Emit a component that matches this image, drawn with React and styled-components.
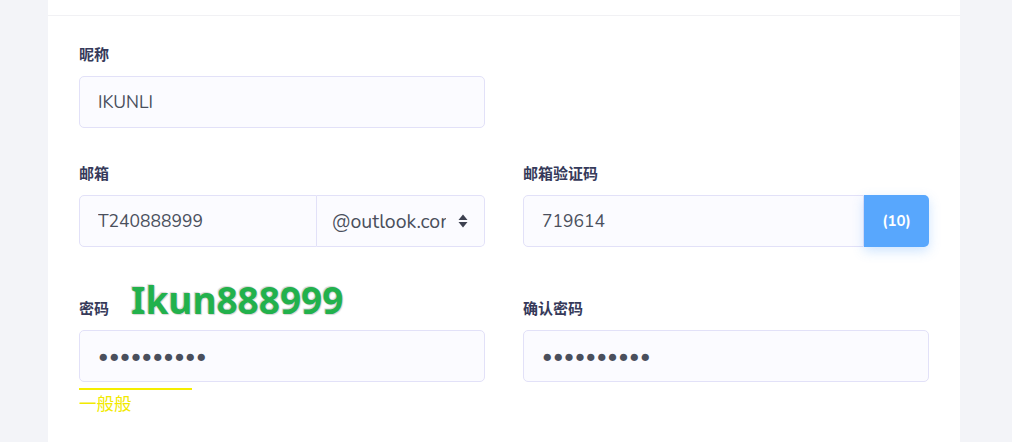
import React from "react";
import styled, { createGlobalStyle } from "styled-components";

const GlobalStyle = createGlobalStyle`
  html, body {
    margin: 0;
    padding: 0;
    background: #f3f4f8;
  }
  body {
    font-family: "Nunito", Lato, "Noto Sans CJK SC", sans-serif;
  }
`;

const Page = styled.div`
  min-height: 442px;
  padding-left: 48px;
  overflow: hidden;
`;

const Card = styled.div`
  width: 912px;
  min-height: 442px;
  background: #fff;
`;

const CardHeader = styled.div`
  height: 15px;
  border-bottom: 1px solid #f1f1f4;
`;

const CardBody = styled.div`
  padding: 28px 31px 30px;
  display: flex;
  flex-direction: column;
  gap: 35px;
`;

const Row = styled.div`
  display: grid;
  grid-template-columns: 406px 406px;
  column-gap: 38px;
  row-gap: 11px;
  align-items: end;
`;

const Label = styled.label`
  display: flex;
  align-items: baseline;
  gap: 22px;
  font-family: Lato, "Noto Sans CJK SC", sans-serif;
  font-size: 15px;
  line-height: 21px;
  font-weight: 700;
  color: #363a5a;
`;

const Hint = styled.span`
  font-family: "Noto Sans", "Noto Sans CJK SC", sans-serif;
  font-size: 37px;
  line-height: 36px;
  font-weight: 700;
  color: #22b14c;
  text-shadow: 0 0 1px #c8c8c8, 1px 1px 1px #d8d8d8, -1px -1px 1px #d8d8d8;
`;

const Field = styled.div`
  align-self: start;
`;

const Input = styled.input`
  box-sizing: border-box;
  width: 100%;
  height: 52px;
  padding: 0 18px;
  border: 1px solid #e2e1f8;
  border-radius: 5px;
  background: #fbfbff;
  font-family: "Nunito", Lato, sans-serif;
  font-size: 17.5px;
  color: #4a4f5c;
  outline: none;
  ${(p) => p.$attached && `border-radius: 5px 0 0 5px; flex: 1; min-width: 0;`}
  &[type="password"] {
    font-size: 20px;
    letter-spacing: 0.4px;
  }
`;

const Group = styled.div`
  display: flex;
  height: 52px;
`;

const SelectWrap = styled.div`
  position: relative;
  width: 168px;
  flex: none;
`;

const Select = styled.select`
  box-sizing: border-box;
  width: 100%;
  height: 52px;
  appearance: none;
  padding: 0 38px 0 15px;
  border: 1px solid #e2e1f8;
  border-left: none;
  border-radius: 0 5px 5px 0;
  background: #fbfbff;
  font-family: "Nunito", Lato, sans-serif;
  font-size: 19.5px;
  color: #4a4f5c;
  outline: none;
`;

const Caret = styled.svg`
  position: absolute;
  right: 17px;
  top: 50%;
  transform: translateY(-50%);
  pointer-events: none;
`;

const SendButton = styled.button`
  width: 65px;
  flex: none;
  border: none;
  border-radius: 0 5px 5px 0;
  background: #58a7fd;
  box-shadow: 0 4px 12px rgba(88, 167, 253, 0.3);
  color: #fff;
  font-family: "Nunito", Lato, sans-serif;
  font-size: 15px;
  font-weight: 700;
`;

const Strength = styled.div`
  margin-top: 6px;
  width: ${(p) => p.$width}px;
  height: 2px;
  background: ${(p) => p.$color};
`;

const StrengthText = styled.div`
  margin-top: 1px;
  font-family: "Noto Sans CJK SC", sans-serif;
  font-size: 17.5px;
  line-height: 24px;
  color: ${(p) => p.$color};
`;

export default function App() {
  return (
    <>
      <GlobalStyle />
      <Page>
        <Card>
          <CardHeader />
          <CardBody>
            <Row>
              <Label>昵称</Label>
              <span />
              <Field>
                <Input value="IKUNLI" readOnly />
              </Field>
            </Row>

            <Row>
              <Label>邮箱</Label>
              <Label>邮箱验证码</Label>
              <Field>
                <Group>
                  <Input $attached value="T240888999" readOnly />
                  <SelectWrap>
                    <Select defaultValue="outlook">
                      <option value="outlook">@outlook.com</option>
                      <option value="qq">@qq.com</option>
                      <option value="163">@163.com</option>
                    </Select>
                    <Caret width="10" height="14" viewBox="0 0 10 14">
                      <path d="M5 0.5L9.5 6H0.5Z" fill="#3d4150" />
                      <path d="M5 13.5L9.5 8H0.5Z" fill="#3d4150" />
                    </Caret>
                  </SelectWrap>
                </Group>
              </Field>
              <Field>
                <Group>
                  <Input $attached value="719614" readOnly />
                  <SendButton>(10)</SendButton>
                </Group>
              </Field>
            </Row>

            <Row>
              <Label>
                密码
                <Hint>Ikun888999</Hint>
              </Label>
              <Label>确认密码</Label>
              <Field>
                <Input type="password" value="Ikun888999" readOnly />
                <Strength $width={113} $color="#f5ee00" />
                <StrengthText $color="#f2ea00">一般般</StrengthText>
              </Field>
              <Field>
                <Input type="password" value="Ikun888999" readOnly />
              </Field>
            </Row>
          </CardBody>
        </Card>
      </Page>
    </>
  );
}
